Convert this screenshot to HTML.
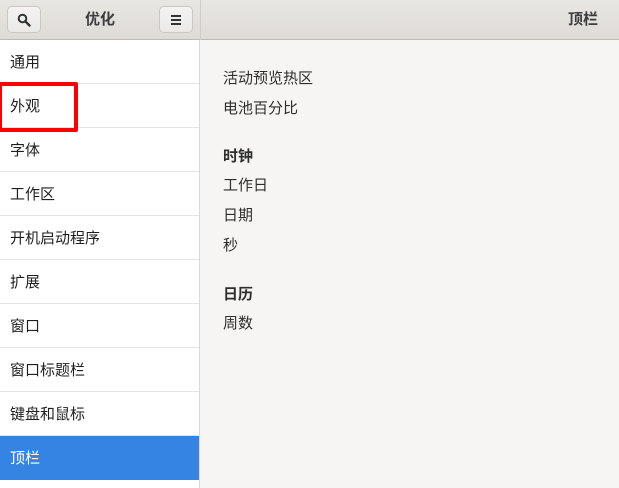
<!DOCTYPE html>
<html><head><meta charset="utf-8"><style>
*{margin:0;padding:0;box-sizing:border-box}
body{width:619px;height:488px;overflow:hidden;background:#f6f5f4;font-family:"Liberation Sans","Noto Sans CJK SC",sans-serif;font-size:15px;color:#2e3436;position:relative}
.hdr{position:absolute;left:0;top:0;width:619px;height:40px;background:linear-gradient(#e8e6e3,#dedbd7);border-bottom:1px solid #bfb8b1}
.hsep{position:absolute;left:200px;top:0;width:1px;height:40px;background:#d0ccc7}
.btn{position:absolute;top:6px;width:34px;height:27px;border:1px solid #cdc7c2;border-radius:5px;background:linear-gradient(#f4f3f2,#ebe9e7);display:flex;align-items:center;justify-content:center}
.t{position:absolute;font-weight:bold;color:#3d3d3d;top:8px}
.side{position:absolute;left:0;top:40px;width:200px;height:448px;background:#fff;border-right:1px solid #dcd9d6}
.row{height:44px;border-bottom:1px solid #e6e4e2;padding-left:10px;line-height:46px;color:#1f1f1f}
.row.sel{background:#3584e4;color:#fff;border-bottom:none}
.red{position:absolute;left:-2px;top:82px;width:80px;height:50px;border:4px solid #f00;border-radius:2px}
.c{position:absolute;left:223px;color:#2e2e2e}
.b{font-weight:bold}
</style></head><body>
<div class="hdr"></div><div class="hsep"></div>
<div class="btn" style="left:7px"><svg width="14" height="14" viewBox="0 0 14 14"><circle cx="5.5" cy="5.5" r="3.8" fill="none" stroke="#2e3436" stroke-width="2"/><path d="M8.3 8.3L12.5 12.5" stroke="#2e3436" stroke-width="2.4" stroke-linecap="round"/></svg></div>
<div class="t" style="left:85px">优化</div>
<div class="btn" style="left:159px"><svg width="12" height="12" viewBox="0 0 12 12"><path d="M1 2h10M1 6h10M1 10h10" stroke="#2e3436" stroke-width="2"/></svg></div>
<div class="t" style="left:568px">顶栏</div>
<div class="side">
<div class="row">通用</div><div class="row">外观</div><div class="row">字体</div><div class="row">工作区</div><div class="row">开机启动程序</div><div class="row">扩展</div><div class="row">窗口</div><div class="row">窗口标题栏</div><div class="row">键盘和鼠标</div><div class="row sel">顶栏</div>
</div>
<div class="red"></div>
<div class="c" style="top:67px">活动预览热区</div>
<div class="c" style="top:97px">电池百分比</div>
<div class="c b" style="top:145px">时钟</div>
<div class="c" style="top:174px">工作日</div>
<div class="c" style="top:204px">日期</div>
<div class="c" style="top:234px">秒</div>
<div class="c b" style="top:283px">日历</div>
<div class="c" style="top:312px">周数</div>
</body></html>
